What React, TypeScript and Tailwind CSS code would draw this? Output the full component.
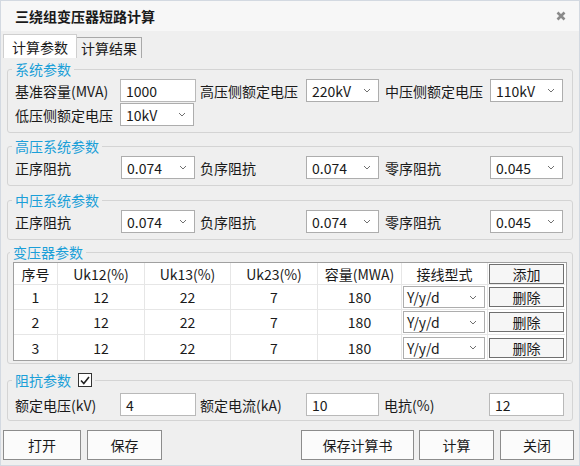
import React from 'react';

const Chevron: React.FC = () => (
    <svg width="8" height="5" viewBox="0 0 8 5" className="shrink-0">
        <path d="M1 1l3 3 3-3" stroke="#707070" strokeWidth="1" fill="none" />
    </svg>
);

const Select: React.FC<{ value: string; className?: string }> = ({ value, className = 'h-[23px]' }) => (
    <div className={`flex items-center justify-between border border-[#adadad] bg-white pr-[7px] ${className}`}>
        <span>{value}</span>
        <Chevron />
    </div>
);

const Input: React.FC<{ value: string; className?: string }> = ({ value, className = '' }) => (
    <div className={`flex h-[23px] items-center border border-[#b9b9b9] bg-white px-[5px] ${className}`}>
        {value}
    </div>
);

const Group: React.FC<{ title: string; extra?: React.ReactNode; className?: string; children: React.ReactNode }> = ({
    title,
    extra,
    className = 'px-[7px] pb-[6px]',
    children,
}) => (
    <fieldset className={`rounded-[3px] border border-[#d4d4d4] ${className}`}>
        <legend className="-ml-[3px] flex items-center px-[3px] leading-[20px] text-[#1b9fd8]">
            {title}
            {extra}
        </legend>
        {children}
    </fieldset>
);

const Btn: React.FC<{ label: string; className: string }> = ({ label, className }) => (
    <div className={`flex items-center justify-center border ${className}`}>{label}</div>
);

const ImpedanceRow: React.FC<{ a: string; b: string; c: string }> = ({ a, b, c }) => (
    <div className="flex items-center">
        <span className="w-[106px]">正序阻抗</span>
        <Select value={a} className="h-[23px] w-[74px] pl-[5px]" />
        <span className="ml-[5px] w-[106px]">负序阻抗</span>
        <Select value={b} className="h-[23px] w-[73px] pl-[5px]" />
        <span className="ml-[6px] w-[105px]">零序阻抗</span>
        <Select value={c} className="h-[23px] w-[73px] pl-[5px]" />
    </div>
);

const rows = [
    { no: '1', uk12: '12', uk13: '22', uk23: '7', cap: '180', wiring: 'Y/y/d' },
    { no: '2', uk12: '12', uk13: '22', uk23: '7', cap: '180', wiring: 'Y/y/d' },
    { no: '3', uk12: '12', uk13: '22', uk23: '7', cap: '180', wiring: 'Y/y/d' },
];

const cell = 'flex items-center justify-center border-r border-[#e6e6e6]';
const footBtn = 'h-[30px] border-[#8c8c8c] bg-[#fbfbfb]';

const App: React.FC = () => {
    return (
        <div className="flex h-[466px] w-[580px] flex-col overflow-hidden border border-[#d3d9e1] bg-[#efefef] font-['Microsoft_YaHei','Noto_Sans_CJK_SC',sans-serif] text-[14px] leading-none text-[#1a1a1a]">
            {/* title bar */}
            <div className="flex h-[30px] shrink-0 items-center justify-between bg-[#f7f7f7] pl-[14px] pr-[13px]">
                <span className="font-bold">三绕组变压器短路计算</span>
                <svg width="10" height="10" viewBox="0 0 10 10">
                    <path d="M1.5 1.5l7 7M8.5 1.5l-7 7" stroke="#8a8a8a" strokeWidth="2.6" />
                </svg>
            </div>

            {/* tabs */}
            <div className="flex h-[27px] items-end pl-[2px]">
                <div className="flex h-[24px] items-center border border-b-0 border-[#cfcfcf] bg-white px-[8px]">计算参数</div>
                <div className="flex h-[21px] items-center border border-l-0 border-b-0 border-[#a9a9a9] bg-[#f0f0f0] px-[4px]">计算结果</div>
            </div>

            <div className="flex flex-col px-[6px] pt-[1px]">
                <Group title="系统参数">
                    <div className="flex flex-col gap-[1px]">
                        <div className="flex items-center">
                            <span className="w-[105px]">基准容量(MVA)</span>
                            <Input value="1000" className="w-[76px]" />
                            <span className="ml-[4px] w-[106px]">高压侧额定电压</span>
                            <Select value="220kV" className="h-[23px] w-[73px] pl-[5px]" />
                            <span className="ml-[6px] w-[105px]">中压侧额定电压</span>
                            <Select value="110kV" className="h-[23px] w-[73px] pl-[5px]" />
                        </div>
                        <div className="flex items-center">
                            <span className="w-[105px]">低压侧额定电压</span>
                            <Select value="10kV" className="h-[23px] w-[74px] pl-[5px]" />
                        </div>
                    </div>
                </Group>

                <div className="mt-[3px]">
                    <Group title="高压系统参数">
                        <ImpedanceRow a="0.074" b="0.074" c="0.045" />
                    </Group>
                </div>

                <div className="mt-[4px]">
                    <Group title="中压系统参数">
                        <ImpedanceRow a="0.074" b="0.074" c="0.045" />
                    </Group>
                </div>

                <div className="mt-[2px]">
                    <Group title="变压器参数" className="px-[5px] pb-[2px]">
                        <div className="grid grid-cols-[44px_87px_86px_87px_84px_86px_77px] border border-[#a0a0a0] bg-white">
                            <div className={`${cell} h-[22px] border-b`}>序号</div>
                            <div className={`${cell} h-[22px] border-b`}>Uk12(%)</div>
                            <div className={`${cell} h-[22px] border-b`}>Uk13(%)</div>
                            <div className={`${cell} h-[22px] border-b`}>Uk23(%)</div>
                            <div className={`${cell} h-[22px] border-b`}>容量(MWA)</div>
                            <div className={`${cell} h-[22px] border-b`}>接线型式</div>
                            <div className="flex h-[22px] items-center border-b border-[#e6e6e6] px-[1px]">
                                <Btn label="添加" className="h-[20px] w-full border-[#6f6f6f] bg-[#f6f6f6]" />
                            </div>
                            {rows.map((r, i) => {
                                const last = i === rows.length - 1;
                                const rb = last ? '' : 'border-b';
                                return (
                                    <React.Fragment key={r.no}>
                                        <div className={`${cell} h-[25px] ${rb}`}>{r.no}</div>
                                        <div className={`${cell} h-[25px] ${rb}`}>{r.uk12}</div>
                                        <div className={`${cell} h-[25px] ${rb}`}>{r.uk13}</div>
                                        <div className={`${cell} h-[25px] ${rb}`}>{r.uk23}</div>
                                        <div className={`${cell} h-[25px] ${rb}`}>{r.cap}</div>
                                        <div className={`flex h-[25px] items-center border-r border-[#e6e6e6] pl-[1px] pr-[2px] ${rb}`}>
                                            <Select value={r.wiring} className="h-[22px] w-full pl-[3px]" />
                                        </div>
                                        <div className={`flex h-[25px] items-center border-[#e6e6e6] px-[1px] ${rb}`}>
                                            <Btn label="删除" className="h-[20px] w-full border-[#6f6f6f] bg-[#f6f6f6]" />
                                        </div>
                                    </React.Fragment>
                                );
                            })}
                        </div>
                    </Group>
                </div>

                <div className="mt-[6px]">
                    <Group
                        title="阻抗参数"
                        className="px-[7px] pb-[4px]"
                        extra={
                            <span className="ml-[7px] flex h-[14px] w-[14px] items-center justify-center border border-[#333] bg-white">
                                <svg width="10" height="9" viewBox="0 0 10 9">
                                    <path d="M1 4.5l2.8 3L9 1" stroke="#222" strokeWidth="1.6" fill="none" />
                                </svg>
                            </span>
                        }
                    >
                        <div className="mt-[3px] flex items-center">
                            <span className="w-[105px]">额定电压(kV)</span>
                            <Input value="4" className="w-[76px]" />
                            <span className="ml-[4px] w-[106px]">额定电流(kA)</span>
                            <Input value="10" className="w-[73px]" />
                            <span className="ml-[5px] w-[105px]">电抗(%)</span>
                            <Input value="12" className="w-[75px]" />
                        </div>
                    </Group>
                </div>
            </div>

            {/* bottom buttons */}
            <div className="mt-[9px] flex items-center pl-[2px] pr-[5px]">
                <Btn label="打开" className={`${footBtn} w-[78px]`} />
                <Btn label="保存" className={`${footBtn} ml-[6px] w-[75px]`} />
                <div className="flex-1" />
                <Btn label="保存计算书" className={`${footBtn} w-[113px]`} />
                <Btn label="计算" className={`${footBtn} ml-[5px] w-[75px]`} />
                <Btn label="关闭" className={`${footBtn} ml-[6px] w-[74px]`} />
            </div>
        </div>
    );
};

export default App;
